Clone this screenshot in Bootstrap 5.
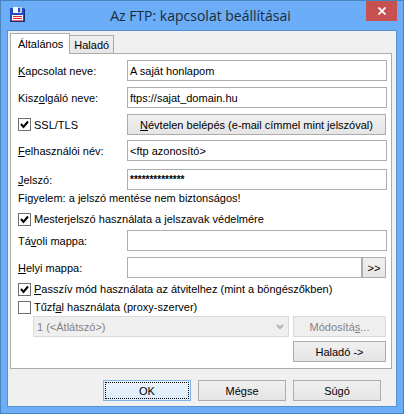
<!DOCTYPE html>
<html lang="hu">
<head>
<meta charset="utf-8">
<meta name="viewport" content="width=device-width, initial-scale=1">
<title>Az FTP: kapcsolat beállításai</title>
<link href="https://cdn.jsdelivr.net/npm/bootstrap@5.3.0/dist/css/bootstrap.min.css" rel="stylesheet">
<style>
body{font-family:"Liberation Sans",Arial,sans-serif;font-size:11px;line-height:16px;color:#000;background:#6badf6}
.dialog-frame{border:1px solid #4a84c0;padding:0 6px 6px;background:#6badf6}
.title-bar{height:29px;padding-left:3px}
.title-icon{margin:6px 10px 0 0}
.title-text{font-family:"Open Sans","Noto Sans",sans-serif;font-size:14px;line-height:22px;color:#1c2b3c}
.close-btn{width:31px;height:20px;background:#c75050;border:0}
.client{background:#f0f0f0;border:1px solid #5590d2;padding:2px 4px 5px 2px}
.dialog-tabs{border:0;padding:0}
.dialog-tabs .nav-link{border:1px solid #acacac;border-bottom:0;border-radius:0;color:#000;background:linear-gradient(#f0f0f0,#e5e5e5);padding:0 4px;height:18px;line-height:19px;margin:0}
.dialog-tabs .nav-link.active{background:#fff;color:#000;border-color:#acacac;height:21px;padding:0 6px 0 7px;margin-bottom:-1px;z-index:1;position:relative}
.panel{border:1px solid #acacac;background:#fff;padding:6px 4px 6px 7px}
.field-label{width:109px;flex:none}
.field{height:21px;border:1px solid #abadb3;border-radius:0;padding:0 2px;font-size:11px;line-height:16px;color:#000;background-color:#fff;min-width:0}
.field.secret{font-size:10px;font-weight:bold}
.push{height:21px;border:1px solid #acacac;border-radius:0;padding:0;font-size:11px;line-height:16px;color:#000;background:linear-gradient(#f0f0f0,#e5e5e5)}
.push:disabled{color:#838383;background:#efefef;border-color:#d9d9d9;opacity:1}
.push.default-push{border-color:#7eb4ea;background:linear-gradient(#ecf4fc,#dcecfc);outline:1px dotted #000;outline-offset:-3px}
.tick{appearance:none;width:13px;height:13px;border:1px solid #707070;border-radius:0;background:#fff;margin:0;flex:none}
.tick:checked{background:#fff url("data:image/svg+xml,%3Csvg xmlns='http://www.w3.org/2000/svg' viewBox='0 0 11 11'%3E%3Cpath d='M2 5l2.5 3L9 2.5' fill='none' stroke='%23000' stroke-width='2'/%3E%3C/svg%3E")}
.tick-row{height:18px;gap:3px}
.proxy-select{height:21px;border:1px solid #d9d9d9;border-radius:0;padding:0 20px 0 3px;font-size:11px;line-height:16px;background:#efefef url("data:image/svg+xml,%3Csvg xmlns='http://www.w3.org/2000/svg' viewBox='0 0 8 6'%3E%3Cpath d='M1 1l3 3 3-3' fill='none' stroke='%23b0b0b0' stroke-width='2'/%3E%3C/svg%3E") no-repeat right 4px center/8px 6px;min-width:0}
.proxy-select:disabled{color:#838383;background-color:#efefef;opacity:1}
.gap-row{margin-bottom:6px}
.gap-mid{margin-bottom:5px}
.gap-small{margin-bottom:2px}
.w-side{width:93px;flex:none}
.w-browse{width:24px;flex:none}
.inset-end{padding-right:1px}
.inset-start{padding-left:15px}
.footer-row{gap:7px;margin-top:11px;padding-right:11px}
.footer-row .push{width:88px}
</style>
</head>
<body>
<main class="dialog-frame">
  <header class="title-bar d-flex align-items-start">
    <svg class="title-icon flex-shrink-0" width="15" height="16" viewBox="0 0 15 16" aria-hidden="true">
      <path d="M0 1h14l1 1v13H0z" fill="#1f4cc4"/><path d="M0 14h15v1H0zM14 2h1v13h-1z" fill="#123080"/>
      <path d="M3 0h9v6H3z" fill="#b9c4da"/><path d="M3 0h5v6H3z" fill="#f4f7fc"/><path d="M8 1h2v4H8z" fill="#1f4cc4"/>
      <path d="M2 8h11v6H2z" fill="#fff"/><path d="M3 9h9v1H3zM3 11h9v1H3z" fill="#e6252c"/><path d="M2 13h11v1H2z" fill="#e8666c"/>
    </svg>
    <h1 class="title-text fw-normal text-center flex-fill mb-0 pt-1">Az FTP: kapcsolat beállításai</h1>
    <button type="button" class="close-btn p-0 d-flex align-items-center justify-content-center" aria-label="Bezárás">
      <svg width="8" height="8" viewBox="0 0 8 8"><path d="M.5.5l7 7m0-7l-7 7" stroke="#fff" stroke-width="1.8"/></svg>
    </button>
  </header>
  <form class="client">
    <div class="nav nav-tabs dialog-tabs align-items-end" role="tablist">
      <button type="button" class="nav-link active" role="tab" aria-selected="true">Általános</button>
      <button type="button" class="nav-link border-start-0" role="tab" aria-selected="false">Haladó</button>
    </div>
    <section class="panel">
      <div class="d-flex align-items-center gap-row">
        <label class="field-label" for="name"><u>K</u>apcsolat neve:</label>
        <input class="form-control field" id="name" type="text" value="A saját honlapom">
      </div>
      <div class="d-flex align-items-center gap-row">
        <label class="field-label" for="host">Kisz<u>o</u>lgáló neve:</label>
        <input class="form-control field" id="host" type="text" value="ftps://sajat_domain.hu">
      </div>
      <div class="d-flex align-items-center gap-mid inset-end">
        <div class="field-label d-flex align-items-center tick-row">
          <input class="tick" id="ssl" type="checkbox" checked><label for="ssl">SSL/TLS</label>
        </div>
        <button type="button" class="btn push flex-fill"><u>N</u>évtelen belépés (e-mail címmel mint jelszóval)</button>
      </div>
      <div class="d-flex align-items-center mb-2">
        <label class="field-label" for="user"><u>F</u>elhasználói név:</label>
        <input class="form-control field" id="user" type="text" value="&lt;ftp azonosító&gt;">
      </div>
      <div class="d-flex align-items-center">
        <label class="field-label" for="pass"><u>J</u>elszó:</label>
        <input class="form-control field secret" id="pass" type="text" value="**************">
      </div>
      <p class="mb-1">Figyelem: a jelszó mentése nem biztonságos!</p>
      <div class="d-flex align-items-center tick-row gap-small">
        <input class="tick" id="master" type="checkbox" checked><label for="master">Mesterjelszó használata a jelszavak védelmére</label>
      </div>
      <div class="d-flex align-items-center gap-row">
        <label class="field-label" for="remote">Tá<u>v</u>oli mappa:</label>
        <input class="form-control field" id="remote" type="text">
      </div>
      <div class="d-flex align-items-center gap-small inset-end">
        <label class="field-label" for="local"><u>H</u>elyi mappa:</label>
        <input class="form-control field" id="local" type="text">
        <button type="button" class="btn push w-browse">&gt;&gt;</button>
      </div>
      <div class="d-flex align-items-center tick-row">
        <input class="tick" id="passive" type="checkbox" checked><label for="passive"><u>P</u>asszív mód használata az átvitelhez (mint a böngészőkben)</label>
      </div>
      <div class="d-flex align-items-center tick-row">
        <input class="tick" id="proxy" type="checkbox"><label for="proxy">Tűzf<u>a</u>l használata (proxy-szerver)</label>
      </div>
      <div class="d-flex mb-1 inset-start inset-end">
        <select class="form-select proxy-select" aria-label="Proxy-szerver" disabled><option>1 (&lt;Átlátszó&gt;)</option></select>
        <button type="button" class="btn push w-side ms-1" disabled>Módosítá<u>s</u>...</button>
      </div>
      <div class="d-flex justify-content-end inset-end">
        <button type="button" class="btn push w-side">Haladó -&gt;</button>
      </div>
    </section>
    <div class="d-flex justify-content-end footer-row">
      <button type="submit" class="btn push default-push">OK</button>
      <button type="button" class="btn push">Mégse</button>
      <button type="button" class="btn push">Súgó</button>
    </div>
  </form>
</main>
<script src="https://cdn.jsdelivr.net/npm/bootstrap@5.3.0/dist/js/bootstrap.bundle.min.js"></script>
</body>
</html>
